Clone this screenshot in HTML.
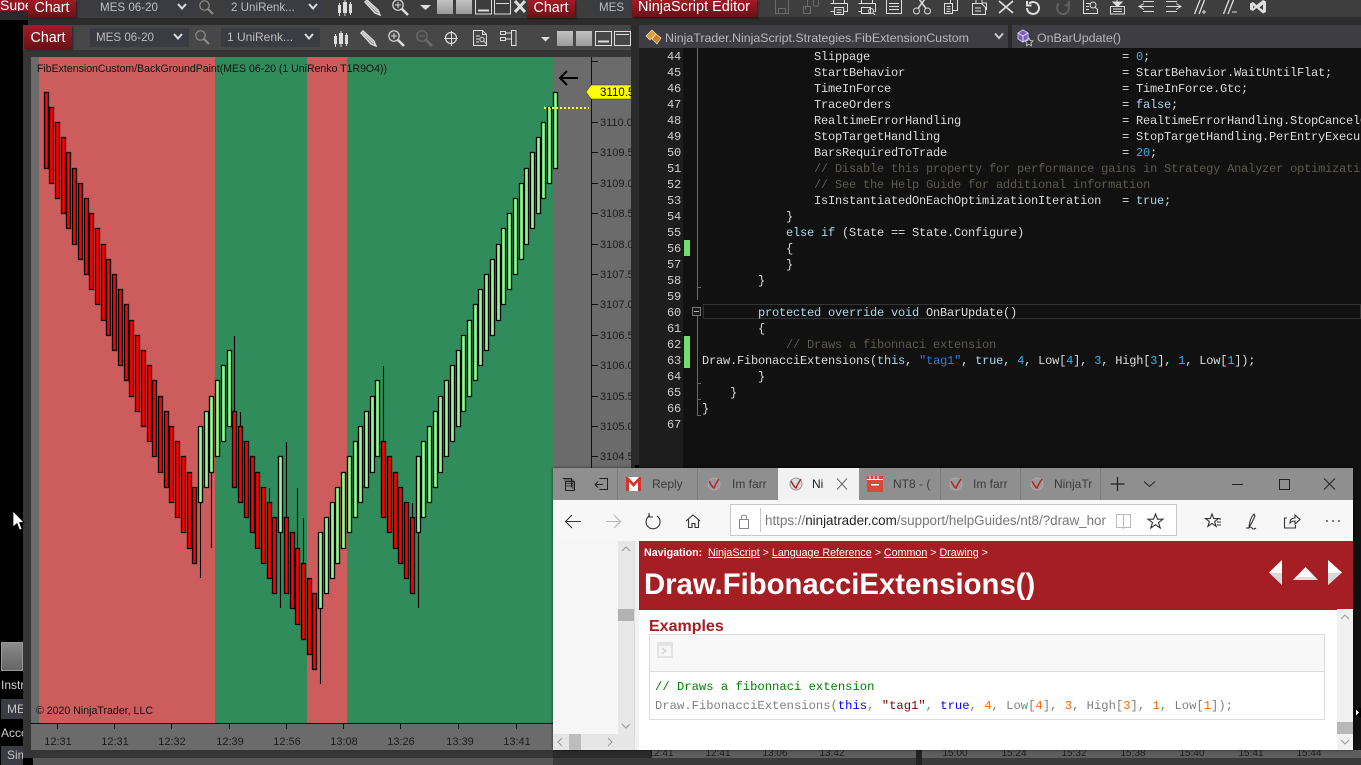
<!DOCTYPE html>
<html><head><meta charset="utf-8"><title>NinjaTrader</title>
<style>
html,body{margin:0;padding:0;width:1361px;height:765px;overflow:hidden;background:#000;font-family:"Liberation Sans",Arial,sans-serif}
#root{position:relative;width:1361px;height:765px;overflow:hidden}
.a{position:absolute;white-space:pre}
.btn{position:absolute;background:linear-gradient(#a01c26,#6a1116);color:#fff;font-size:14.3px;text-align:center;box-shadow:1px 1px 2px rgba(0,0,0,.5)}
.box{position:absolute;background:#3b3b43;color:#bdbdbd;font-size:11.6px;padding-left:6px;box-sizing:border-box}
.code{position:absolute;left:702px;width:659px;height:16px;line-height:16px;white-space:pre;font-family:"Liberation Mono",monospace;font-size:12px;letter-spacing:-.2px;color:#dcdcdc;overflow:hidden;margin-top:1px}
.code i{font-style:normal;position:absolute;left:420px;top:0;white-space:pre}
.k{color:#a4d8ec}.n{color:#2fb5ea}.s{color:#1f82dc}.c{color:#5f5a50}
.ln{position:absolute;left:640px;width:41px;height:16px;line-height:16px;text-align:right;font-family:"Liberation Mono",monospace;font-size:12px;letter-spacing:-.2px;color:#cfcfcf;margin-top:1px}
.tab{position:absolute;top:477px;font-size:12px;color:#222;height:14px;line-height:14px;overflow:hidden}
.m{font-family:"Liberation Mono",monospace;font-size:12.2px;position:absolute;left:655px;white-space:pre}
</style></head><body><div id="root">

<!-- base panels -->
<div class="a" style="left:28px;top:0;width:604px;height:18px;background:#3d3d3d"></div>
<div class="a" style="left:28px;top:18px;width:604px;height:7px;background:#2c2c2c"></div>
<div class="a" style="left:0;top:0;width:28px;height:11px;background:#8f1820;color:#fff;font-size:14px;line-height:13px;overflow:hidden;padding-left:0"><span style="position:relative;top:-1px">Supe</span></div>
<div class="a" style="left:0;top:11px;width:28px;height:9px;background:#2a2a2a"></div>
<div class="btn" style="left:28px;top:0;width:48px;height:17px;line-height:16px">Chart</div>
<div class="box" style="left:94px;top:0;width:99px;height:16px;line-height:15px">MES 06-20</div>
<div class="box" style="left:225px;top:0;width:99px;height:16px;line-height:15px">2 UniRenk...</div>
<div class="btn" style="left:527px;top:0;width:48px;height:18px;line-height:17px">Chart</div>
<div class="box" style="left:593px;top:0;width:39px;height:16px;line-height:15px;overflow:hidden">MES 06-20</div>

<!-- main chart window -->
<div class="a" style="left:23px;top:25px;width:609px;height:25px;background:#474747"></div>
<div class="a" style="left:23px;top:50px;width:609px;height:708px;background:#353535"></div>
<div class="a" style="left:33px;top:758px;width:520px;height:7px;background:#565656"></div>
<div class="a" style="left:31px;top:57px;width:600px;height:693px;background:#6b6b6b"></div>
<div class="a" style="left:631px;top:25px;width:4px;height:740px;background:#2b2b2b"></div>
<div class="btn" style="left:24px;top:26px;width:48px;height:23px;line-height:25px">Chart</div>
<div class="box" style="left:90px;top:28px;width:99px;height:19px;line-height:19px">MES 06-20</div>
<div class="box" style="left:221px;top:28px;width:99px;height:19px;line-height:19px;font-size:12px">1 UniRenk...</div>

<!-- left column -->
<div class="a" style="left:1px;top:642px;width:22px;height:29px;background:linear-gradient(#8a8a8a,#666);border:1px solid #999;box-sizing:border-box"></div>
<div class="a" style="left:1px;top:678px;width:22px;overflow:hidden;color:#cfcfcf;font-size:12px">Instr</div>
<div class="a" style="left:1px;top:699px;width:22px;height:20px;background:#3b3b43;color:#c5c5c5;font-size:12px;line-height:20px;overflow:hidden;padding-left:6px;box-sizing:border-box">MES</div>
<div class="a" style="left:1px;top:726px;width:22px;overflow:hidden;color:#cfcfcf;font-size:12px">Account</div>
<div class="a" style="left:1px;top:746px;width:22px;height:19px;background:#3b3b43;color:#c5c5c5;font-size:12px;line-height:19px;overflow:hidden;padding-left:6px;box-sizing:border-box">Sim</div>

<!-- chart drawings -->
<svg class="a" style="left:0;top:0" width="1361" height="765" xmlns="http://www.w3.org/2000/svg">
<rect x="39" y="57" width="176" height="666" fill="#cd5c5c"/>
<rect x="215" y="57" width="92" height="666" fill="#318c5b"/>
<rect x="307" y="57" width="40" height="666" fill="#cd5c5c"/>
<rect x="347" y="57" width="206.500" height="666" fill="#318c5b"/>
<path d="M31 723.500H631M591.500 57V723" stroke="#111" fill="none"/>
<path stroke="#000" fill="none" stroke-width="1.100" d="M200.500 502V578M211.500 472V548M234.500 336V412M240.500 412V427M269.500 488V503M280.500 532V608M286.500 442V518M297.500 488V549M303.500 518V564M320.500 608V684M383.500 366V442M412.500 503V518M418.500 532V608"/>
<path fill="#ff0000" stroke="#000" stroke-width="1.300" d="M44.500 92.500h4v76h-4zM49.500 107.500h4v76h-4zM55.500 122.500h4v76h-4zM61.500 137.500h4v76h-4zM66.500 152.500h4v76h-4zM72.500 168.500h4v76h-4zM78.500 183.500h4v76h-4zM84.500 198.500h4v76h-4zM89.500 213.500h4v76h-4zM95.500 228.500h4v76h-4zM101.500 244.500h4v76h-4zM106.500 259.500h4v76h-4zM112.500 274.500h4v76h-4zM118.500 289.500h4v76h-4zM124.500 304.500h4v76h-4zM129.500 320.500h4v76h-4zM135.500 335.500h4v76h-4zM141.500 350.500h4v76h-4zM147.500 365.500h4v76h-4zM152.500 380.500h4v76h-4zM158.500 396.500h4v76h-4zM164.500 411.500h4v76h-4zM169.500 426.500h4v76h-4zM175.500 441.500h4v76h-4zM181.500 456.500h4v76h-4zM187.500 472.500h4v76h-4zM192.500 487.500h4v76h-4zM232.500 411.500h4v76h-4zM238.500 426.500h4v76h-4zM244.500 441.500h4v76h-4zM250.500 456.500h4v76h-4zM255.500 472.500h4v76h-4zM261.500 487.500h4v76h-4zM267.500 502.500h4v76h-4zM272.500 517.500h4v76h-4zM284.500 517.500h4v76h-4zM290.500 532.500h4v76h-4zM295.500 548.500h4v76h-4zM301.500 563.500h4v76h-4zM307.500 578.500h4v76h-4zM312.500 593.500h4v76h-4zM381.500 441.500h4v76h-4zM387.500 456.500h4v76h-4zM393.500 472.500h4v76h-4zM398.500 487.500h4v76h-4zM404.500 502.500h4v76h-4zM410.500 517.500h4v76h-4z"/>
<path fill="#8dfc8d" stroke="#000" stroke-width="1.300" d="M198.500 426.500h4v76h-4zM204.500 411.500h4v76h-4zM209.500 396.500h4v76h-4zM215.500 380.500h4v76h-4zM221.500 365.500h4v76h-4zM227.500 350.500h4v76h-4zM278.500 456.500h4v76h-4zM318.500 532.500h4v76h-4zM324.500 517.500h4v76h-4zM330.500 502.500h4v76h-4zM335.500 487.500h4v76h-4zM341.500 472.500h4v76h-4zM347.500 456.500h4v76h-4zM353.500 441.500h4v76h-4zM358.500 426.500h4v76h-4zM364.500 411.500h4v76h-4zM370.500 396.500h4v76h-4zM375.500 380.500h4v76h-4zM416.500 456.500h4v76h-4zM421.500 441.500h4v76h-4zM427.500 426.500h4v76h-4zM433.500 411.500h4v76h-4zM438.500 396.500h4v76h-4zM444.500 380.500h4v76h-4zM450.500 365.500h4v76h-4zM456.500 350.500h4v76h-4zM461.500 335.500h4v76h-4zM467.500 320.500h4v76h-4zM473.500 304.500h4v76h-4zM478.500 289.500h4v76h-4zM484.500 274.500h4v76h-4zM490.500 259.500h4v76h-4zM496.500 244.500h4v76h-4zM501.500 228.500h4v76h-4zM507.500 213.500h4v76h-4zM513.500 198.500h4v76h-4zM519.500 183.500h4v76h-4zM524.500 168.500h4v76h-4zM530.500 152.500h4v76h-4zM536.500 137.500h4v76h-4zM541.500 122.500h4v76h-4zM547.500 107.500h4v76h-4zM553.500 92.500h4v76h-4z"/>
<path d="M544 108H589" stroke="#ffff00" stroke-width="2" stroke-dasharray="2 2"/>
<path d="M578 78H560M567 71l-7 7 7 7" stroke="#000" stroke-width="2" fill="none"/>
<path d="M592 61.500h6M592 92.500h6M592 122.500h6M592 152.500h6M592 183.500h6M592 213.500h6M592 244.500h6M592 274.500h6M592 304.500h6M592 335.500h6M592 365.500h6M592 396.500h6M592 426.500h6M592 456.500h6M57.500 723v6M114.500 723v6M171.500 723v6M229.500 723v6M286.500 723v6M343.500 723v6M400.500 723v6M458.500 723v6M516.500 723v6" stroke="#111" fill="none"/>
<g font-family="Liberation Sans" font-size="11" fill="#1c1c1c">
<text x="600" y="126">3110.0</text><text x="600" y="156">3109.5</text><text x="600" y="187">3109.0</text><text x="600" y="217">3108.5</text><text x="600" y="248">3108.0</text><text x="600" y="278">3107.5</text><text x="600" y="308">3107.0</text><text x="600" y="339">3106.5</text><text x="600" y="369">3106.0</text><text x="600" y="400">3105.5</text><text x="600" y="430">3105.0</text><text x="600" y="460">3104.5</text>
</g>
<g font-family="Liberation Sans" font-size="11" fill="#1c1c1c" text-anchor="middle">
<text x="58" y="745">12:31</text><text x="115" y="745">12:31</text><text x="172" y="745">12:32</text><text x="230" y="745">12:39</text><text x="287" y="745">12:56</text><text x="344" y="745">13:08</text><text x="401" y="745">13:26</text><text x="460" y="745">13:39</text><text x="517" y="745">13:41</text>
</g>
<path d="M591 85H631V99H591L586 92Z" fill="#ffff00" stroke="#333" stroke-width=".6"/>
<text x="600" y="96" font-family="Liberation Sans" font-size="11.500" fill="#000">3110.5</text>
<text x="37" y="72" font-family="Liberation Sans" font-size="10.800" fill="#111" textLength="350" lengthAdjust="spacingAndGlyphs">FibExtensionCustom/BackGroundPaint(MES 06-20 (1 UniRenko T1R9O4))</text>
<text x="36" y="714" font-family="Liberation Sans" font-size="11" fill="#111" textLength="117" lengthAdjust="spacingAndGlyphs">© 2020 NinjaTrader, LLC</text>

<defs>
<g id="cd" fill="#dcdcdc"><rect x="0" y="5" width="3" height="8"/><rect x="1" y="3" width="1" height="13"/><rect x="5" y="2" width="4" height="11"/><rect x="6.500" y="0" width="1" height="16"/><rect x="11" y="4" width="3" height="9"/><rect x="12" y="2" width="1" height="13"/></g>
<g id="pc" fill="none" stroke="#dcdcdc"><path d="M1 3L3 1L14 11L16 16L11 14Z" stroke-width="1.400" fill="#8a8a8a"/><path d="M3 3L13.500 13" stroke-width="1.200"/></g>
<g id="zi" fill="none" stroke="#dcdcdc"><circle cx="6" cy="6" r="5.200" stroke-width="1.200"/><path d="M10 10L16 16" stroke-width="2.600"/><path d="M3 6h6M6 3v6"/></g>
<g id="zo" fill="none" stroke="#6d6d6d"><circle cx="6" cy="6" r="5.200" stroke-width="1.200"/><path d="M10 10L16 16" stroke-width="2.600"/><path d="M3 6h6"/></g>
<g id="ms" fill="none" stroke="#8c8c8c"><circle cx="5.500" cy="5.500" r="4.700" stroke-width="1.200"/><path d="M9 9L14 14" stroke-width="2"/></g>
<path id="ch" d="M0 0L4 4.500L8 0" fill="none" stroke="#dcdcdc" stroke-width="2"/>
<linearGradient id="gb" x1="0" x2="0" y1="0" y2="1"><stop offset="0" stop-color="#c2c2c2"/><stop offset="1" stop-color="#9a9a9a"/></linearGradient>
</defs>

<!-- main toolbar -->
<use href="#ms" x="195" y="30"/>
<use href="#ch" x="174" y="34"/><use href="#ch" x="305" y="34"/>
<use href="#cd" x="334" y="31"/><use href="#pc" x="360" y="30"/><use href="#zi" x="388" y="30"/><use href="#zo" x="416" y="30"/>
<g fill="none" stroke="#dcdcdc"><circle cx="451" cy="38" r="5.500" stroke-width="1.200"/><path d="M444 38.500h14M451.500 31v15"/>
<path d="M473.500 30.500h9l4 4v11h-13zM482.500 30.500v4h4M476 36h4M476 39h3M476 42h3" stroke-width="1"/><circle cx="482" cy="39.500" r="2.200"/><path d="M484 41.500l3 3"/>
<path d="M500.500 31.500h5v3h-5zM500.500 37.500h5v3h-5zM505.500 33h6M505.500 39h6M511.500 30.500h4.500v15h-4.500z"/></g>
<path d="M541 37h9l-4.500 4.500z" fill="#ddd"/>
<rect x="557" y="31" width="16" height="15" fill="url(#gb)"/><rect x="576" y="31" width="16" height="15" fill="url(#gb)"/>
<g fill="none" stroke="#dcdcdc"><rect x="595.500" y="31.500" width="16" height="14"/><path d="M598 41.500h11" stroke-width="2"/><rect x="614.500" y="31.500" width="16" height="14"/><path d="M616 34.500h13"/></g>
<!-- back toolbar -->
<use href="#ms" x="199" y="0"/>
<use href="#ch" x="178" y="4"/><use href="#ch" x="309" y="4"/>
<use href="#cd" x="338" y="0"/><use href="#pc" x="364" y="-1"/><use href="#zi" x="392" y="-1"/>
<path d="M420 5h11l-5.500 5z" fill="#ddd"/>
<rect x="437" y="0" width="16" height="14" fill="url(#gb)"/><rect x="456" y="0" width="16" height="14" fill="url(#gb)"/>
<g fill="none" stroke="#dcdcdc"><rect x="475.500" y="-1" width="16" height="15"/><path d="M478 10.500h11" stroke-width="2"/><rect x="494.500" y="-1" width="16" height="15"/><path d="M496 3.500h13"/></g>
<path d="M515 1L525 12M525 1L515 12" stroke="#ddd" stroke-width="3"/>
</svg>

<!-- editor -->
<div class="a" style="left:632px;top:0;width:729px;height:17px;background:#3e3e3e"></div>
<div class="a" style="left:632px;top:17px;width:729px;height:8px;background:#2d2d2d"></div>
<div class="a" style="left:632px;top:25px;width:729px;height:440px;background:#2a2a2a"></div>
<div class="a" style="left:639px;top:25px;width:369px;height:23px;background:#3d3d43"></div>
<div class="a" style="left:1012px;top:25px;width:349px;height:23px;background:#3d3d43"></div>
<div class="a" style="left:639px;top:48px;width:722px;height:702px;background:#111"></div>
<div class="a" style="left:639px;top:48px;width:44px;height:702px;background:#1d1d1d"></div>
<div class="btn" style="left:632px;top:0;width:125px;height:17px;line-height:14px;font-size:14.500px;text-align:left;padding-left:6px;box-sizing:border-box">NinjaScript Editor</div>
<div class="a" style="left:665px;top:31px;font-size:12.400px;color:#b9b9b9">NinjaTrader.NinjaScript.Strategies.FibExtensionCustom</div>
<div class="a" style="left:1037px;top:31px;font-size:12.400px;color:#b9b9b9">OnBarUpdate()</div>

<div class="ln" style="top:48px">44</div><div class="ln" style="top:64px">45</div><div class="ln" style="top:80px">46</div><div class="ln" style="top:96px">47</div><div class="ln" style="top:112px">48</div><div class="ln" style="top:128px">49</div><div class="ln" style="top:144px">50</div><div class="ln" style="top:160px">51</div><div class="ln" style="top:176px">52</div><div class="ln" style="top:192px">53</div><div class="ln" style="top:208px">54</div><div class="ln" style="top:224px">55</div><div class="ln" style="top:240px">56</div><div class="ln" style="top:256px">57</div><div class="ln" style="top:272px">58</div><div class="ln" style="top:288px">59</div><div class="ln" style="top:304px">60</div><div class="ln" style="top:320px">61</div><div class="ln" style="top:336px">62</div><div class="ln" style="top:352px">63</div><div class="ln" style="top:368px">64</div><div class="ln" style="top:384px">65</div><div class="ln" style="top:400px">66</div><div class="ln" style="top:416px">67</div>

<div class="a" style="left:684px;top:240px;width:6px;height:16px;background:#6fe06f"></div>
<div class="a" style="left:684px;top:336px;width:6px;height:32px;background:#6fe06f"></div>
<div class="a" style="left:703px;top:304px;width:658px;height:15px;border:1px solid #333;box-sizing:border-box"></div>

<div class="code" style="top:48px">                Slippage<i>= <span class="n">0</span>;</i></div>
<div class="code" style="top:64px">                StartBehavior<i>= StartBehavior.WaitUntilFlat;</i></div>
<div class="code" style="top:80px">                TimeInForce<i>= TimeInForce.Gtc;</i></div>
<div class="code" style="top:96px">                TraceOrders<i>= <span class="k">false</span>;</i></div>
<div class="code" style="top:112px">                RealtimeErrorHandling<i>= RealtimeErrorHandling.StopCancelClose;</i></div>
<div class="code" style="top:128px">                StopTargetHandling<i>= StopTargetHandling.PerEntryExecution;</i></div>
<div class="code" style="top:144px">                BarsRequiredToTrade<i>= <span class="n">20</span>;</i></div>
<div class="code c" style="top:160px">                // Disable this property for performance gains in Strategy Analyzer optimizations</div>
<div class="code c" style="top:176px">                // See the Help Guide for additional information</div>
<div class="code" style="top:192px">                IsInstantiatedOnEachOptimizationIteration<i>= <span class="k">true</span>;</i></div>
<div class="code" style="top:208px">            }</div>
<div class="code" style="top:224px">            <span class="k">else if</span> (State == State.Configure)</div>
<div class="code" style="top:240px">            {</div>
<div class="code" style="top:256px">            }</div>
<div class="code" style="top:272px">        }</div>
<div class="code" style="top:304px">        <span class="k">protected override void</span> OnBarUpdate()</div>
<div class="code" style="top:320px">        {</div>
<div class="code c" style="top:336px">            // Draws a fibonnaci extension</div>
<div class="code" style="top:352px">Draw.FibonacciExtensions(<span class="k">this</span>, <span class="s">"tag1"</span>, <span class="k">true</span>, <span class="n">4</span>, Low[<span class="n">4</span>], <span class="n">3</span>, High[<span class="n">3</span>], <span class="n">1</span>, Low[<span class="n">1</span>]);</div>
<div class="code" style="top:368px">        }</div>
<div class="code" style="top:384px">    }</div>
<div class="code" style="top:400px">}</div>

<svg class="a" style="left:0;top:0" width="1361" height="765" xmlns="http://www.w3.org/2000/svg">
<!-- fold lines -->
<path d="M697.500 48V287.500H701M697.500 316V415.500H701M697.500 383.500H701M697.500 399.500H701M697.500 48V300" stroke="#6a6a6a" fill="none"/>
<rect x="692.500" y="307.500" width="8" height="8" fill="#1a1a1a" stroke="#777"/><path d="M694 311.500h5" stroke="#bbb"/>
<!-- editor combo icons -->
<path d="M646 36l6-6 4 4-6 6z" fill="#e09a35" stroke="#f2e2c4" stroke-width=".7"/><path d="M652 39l4-5 5 4-4 6z" fill="#c97f24" stroke="#f2e2c4" stroke-width=".7"/>
<path d="M1018 33l5-3 5 3v6l-5 3-5-3z" fill="#7a5fc0" stroke="#cfc5ef"/><path d="M1018 33l5 3 5-3M1023 36v6" stroke="#e0daf5" fill="none"/><path d="M1029 38l1.200 2.500 2.800.4-2 2 .5 2.800-2.500-1.300-2.500 1.300.5-2.800-2-2 2.800-.4z" fill="#333" stroke="#ddd" stroke-width=".8"/>
<path d="M995 33.500l4 4.500 4-4.500" fill="none" stroke="#c8c8c8" stroke-width="2"/>
<!-- editor toolbar -->
<g fill="none" stroke="#6a6a6a">
<path d="M775.500 0V13.500H788.500V0M778.500 13V8.500H785.500V13"/>
<path d="M803.500 6.500h7v7h-7zM807.500 0v6M813.500 0v6h5V0M805.500 6.500v3"/>
</g>
<g fill="none" stroke="#dedede">
<path d="M833.500 0v3.500h11V0M830.500 3.500h17v8h-4M834.500 11.500h-4M834.500 7.500h9v7h-9zM836.500 10h5M836.500 12.500h5"/>
<path d="M861.500 0v3.500h11V0M858.500 3.500h17v8h-1M861.500 11.500h-3M861.500 7.500h9v6h-9z"/><circle cx="871" cy="11" r="2.500"/><path d="M873 13l2 2"/>
<path d="M886.500 0V13.500H901.500V0M889 3.500h10M889 6.500h10M889 9.500h10"/>
<circle cx="916.500" cy="11" r="3"/><circle cx="927.500" cy="11" r="3"/><path d="M918 8.500L925 -1M926 8.500L919 -1" stroke-width="1.500"/>
<path d="M944.500 3.500h8v10h-8zM950.500 3.500V0M957.500 0V10.500H952.500M946.500 6.500h4M946.500 9h4M946.500 11.500h4"/>
<path d="M972.500 3.500h9l4 4v7h-13zM976 0V3M982 0V3h4.500V10M975 8h6M975 11h6"/>
<path d="M999 1L1013 13M1013 1L999 13" stroke-width="1.800"/>
<path d="M1029 3.500A6 6 0 1 1 1027 8M1027 1v4.500h4.500" stroke-width="2"/>
</g>
<path d="M1059 3.500A6 6 0 1 0 1067 3.500M1069 1v4.500h-4.500" fill="none" stroke="#5f5f5f" stroke-width="2"/>
<g fill="none" stroke="#dedede">
<path d="M1083.500 0V13.500H1097.500V9M1086 3.500h4M1086 6.500h3M1086 9.500h3"/><circle cx="1093" cy="5" r="3"/><path d="M1095 7l3 3"/>
<path d="M1110.500 6.500H1124.500V14H1110.500zM1113 9h9M1113 11.500h9M1117 0v4"/><path d="M1113 2h9l-4.500 4.500z" fill="#dedede"/>
<path d="M1144 3.500l-5 3 5 3M1139 6.500H1154M1143 1.500H1154M1143 11.500H1154"/>
<path d="M1176 3.500l5 3-5 3M1166 6.500H1181M1166 1.500H1177M1166 11.500H1177"/>
<path d="M1194.500 14L1200 0M1199 14L1204.500 0" stroke-width="1.300"/><path d="M1204 10v4M1202 12h4"/>
<path d="M1223.500 14L1229 0M1228 14L1233.500 0" stroke-width="1.300"/><path d="M1232 12h5"/>
</g>
<path d="M1250 3.500l3-1.500 3.500 3L1263 0l3 1.500v10.500l-3 1.500-6.500-5.500-3.500 3-3-1.500zM1253 5.500v3l1.500-1.500zM1263 4.500l-3.500 3 3.500 2.500z" fill="#dedede" fill-rule="evenodd"/>
<!-- small right scroll arrow -->
<rect x="1354" y="708" width="7" height="9" fill="#000"/><path d="M1356 709.500l3 3-3 3z" fill="#fff"/>
<!-- mouse cursor -->
<path d="M13 511V527L17 523.500L19.500 530L22 529L19.500 522.500H24Z" fill="#fff" stroke="#000" stroke-width=".7"/>
</svg>

<!-- strip under browser -->
<div class="a" style="left:553px;top:750px;width:808px;height:8px;background:#5e5e5e"></div>
<div class="a" style="left:553px;top:750px;width:99px;height:8px;background:#2b2b2b"></div>
<div class="a" style="left:553px;top:758px;width:808px;height:7px;background:#3a3a3a"></div>
<div class="a" style="left:916px;top:750px;width:6px;height:15px;background:#222"></div>
<svg class="a" style="left:0;top:0" width="1361" height="765" xmlns="http://www.w3.org/2000/svg"><g font-family="Liberation Sans" font-size="10" fill="#1c1c1c" text-anchor="middle"><text x="661" y="756">12:41</text><text x="718" y="756">12:41</text><text x="775" y="756">13:06</text><text x="832" y="756">13:42</text><text x="955" y="756">15:00</text><text x="1014" y="756">15:24</text><text x="1074" y="756">15:32</text><text x="1133" y="756">15:38</text><text x="1192" y="756">15:40</text><text x="1251" y="756">15:41</text><text x="1309" y="756">15:44</text></g></svg>

<!-- browser -->
<div class="a" style="left:553px;top:468px;width:800px;height:282px;background:#fff;box-shadow:0 0 3px rgba(0,0,0,.6)"></div>
<div class="a" style="left:553px;top:468px;width:800px;height:32px;background:#8f8f8f"></div>
<div class="a" style="left:778px;top:468px;width:81px;height:32px;background:#f2f2f2"></div>
<div class="a" style="left:553px;top:500px;width:800px;height:41px;background:#f7f7f7"></div>
<div class="a" style="left:553px;top:541px;width:65px;height:193px;background:#f6f6f6"></div>
<div class="a" style="left:618px;top:541px;width:16px;height:193px;background:#e7e7e7"></div>
<div class="a" style="left:618px;top:609px;width:16px;height:12px;background:#b2b2b2"></div>
<div class="a" style="left:553px;top:734px;width:81px;height:16px;background:#e6e6e6"></div>
<div class="a" style="left:569px;top:734px;width:12px;height:16px;background:#bdbdbd"></div>
<div class="a" style="left:634px;top:541px;width:5px;height:209px;background:#f2f2f2;border-left:1px solid #ddd;box-sizing:border-box"></div>
<div class="a" style="left:639px;top:541px;width:714px;height:69px;background:#a51e24"></div>
<div class="a" style="left:1337px;top:610px;width:16px;height:140px;background:#f1f1f1"></div>
<div class="a" style="left:1337px;top:722px;width:16px;height:12px;background:#b8b8b8"></div>
<div class="a" style="left:1337px;top:609px;width:16px;height:4px;background:#f1f1f1"></div>

<div class="tab" style="left:652px;width:37px;color:#3a3a3a">Reply t</div>
<div class="tab" style="left:732px;width:38px;color:#3a3a3a">Im farr</div>
<div class="tab" style="left:812px;width:14px">Ni</div>
<div class="tab" style="left:893px;width:38px;color:#3a3a3a">NT8 - (</div>
<div class="tab" style="left:973px;width:38px;color:#3a3a3a">Im farr</div>
<div class="tab" style="left:1054px;width:38px;color:#3a3a3a">NinjaTr</div>

<div class="a" style="left:730px;top:504px;width:447px;height:32px;border:1px solid #c8c8c8;background:#fff;box-sizing:border-box"></div>
<div class="a" style="left:765px;top:513px;width:341px;overflow:hidden;font-size:13.400px;color:#777">https://<span style="color:#222">ninjatrader.com</span>/support/helpGuides/nt8/?draw_hor</div>

<div class="a" style="left:644px;top:547px;font-size:10.700px;color:#fff;font-weight:bold">Navigation:</div>
<div class="a" style="left:708px;top:547px;font-size:10.700px;color:#fff"><u>NinjaScript</u> &gt; <u>Language Reference</u> &gt; <u>Common</u> &gt; <u>Drawing</u> &gt;</div>
<div class="a" style="left:644px;top:568px;font-size:29.300px;line-height:34px;color:#fff;font-weight:bold">Draw.FibonacciExtensions()</div>
<div class="a" style="left:649px;top:617px;font-size:16px;line-height:19px;color:#a51e24;font-weight:bold">Examples</div>
<div class="a" style="left:649px;top:634px;width:676px;height:86px;border:1px solid #ddd;box-sizing:border-box;background:#fff"></div>
<div class="a" style="left:650px;top:635px;width:674px;height:36px;background:#f8f8f8;border-bottom:1px solid #ddd"></div>
<div class="m" style="top:680px;color:#008000">// Draws a fibonnaci extension</div>
<div class="m" style="top:699px;color:#808080">Draw.FibonacciExtensions(<span style="color:#0000ff">this</span>, <span style="color:#800000">"tag1"</span>, <span style="color:#0000ff">true</span>, <span style="color:#ff6600">4</span>, Low[<span style="color:#ff6600">4</span>], <span style="color:#ff6600">3</span>, High[<span style="color:#ff6600">3</span>], <span style="color:#ff6600">1</span>, Low[<span style="color:#ff6600">1</span>]);</div>

<svg class="a" style="left:0;top:0" width="1361" height="765" xmlns="http://www.w3.org/2000/svg">
<path d="M617.500 468V500M697.500 468V500M940.500 468V500M1020.500 468V500M1100.500 468V500" stroke="#7b7b7b"/>
<!-- tab bar left icons -->
<g fill="none" stroke="#222">
<path d="M562.500 478.500h9v9M565.500 481.500h9v9h-9z"/><path d="M564 480h9v9M566 483.500h7M566 486h7" stroke-width=".8"/>
<path d="M595 484.500h8M598 481.500l-3 3 3 3M599.500 478.500h8v11h-8"/>
<path d="M1117.500 477v14M1110.500 484h14" stroke-width="1.200"/>
<path d="M1144 481.500l5.500 5 5.500-5"/>
<path d="M1232 484.500h11M1279.500 479.500h10v10h-10zM1324 478.500l11 11M1335 478.500l-11 11"/>
<path d="M837 478.500l10 11M847 478.500l-10 11" stroke="#666"/>
</g>
<!-- favicons -->
<rect x="626" y="477" width="15" height="14" fill="#fff"/><path d="M626 477h2l5.500 6 5.500-6h2v14h-3v-9l-4.500 5-4.500-5v9h-3z" fill="#d8332a"/>
<g fill="none" stroke-width="1.500"><circle cx="714" cy="484" r="6" fill="#9a9a9a" stroke="#aaa" stroke-width="1"/><path d="M709 481q3 6 5 7q1-3 5-9" stroke="#b3262b"/>
<circle cx="796" cy="484" r="6" fill="#ddd" stroke="#999" stroke-width="1"/><path d="M791 481q3 6 5 7q1-3 5-9" stroke="#b3262b"/>
<circle cx="956" cy="484" r="6" fill="#9a9a9a" stroke="#aaa" stroke-width="1"/><path d="M951 481q3 6 5 7q1-3 5-9" stroke="#b3262b"/>
<circle cx="1037" cy="484" r="6" fill="#9a9a9a" stroke="#aaa" stroke-width="1"/><path d="M1032 481q3 6 5 7q1-3 5-9" stroke="#b3262b"/></g>
<rect x="867" y="476" width="16" height="16" fill="#d9483a"/><path d="M867 479.500h16" stroke="#fff"/><path d="M870 476v3M874 476v3M878 476v3" stroke="#fff"/><rect x="871" y="484" width="8" height="1.500" fill="#fff"/>
<!-- nav icons -->
<g fill="none" stroke="#333" stroke-width="1.100">
<path d="M566 521.500H581M572 515l-6.500 6.500 6.500 6.500"/>
<path d="M606 521.500H621M614 515l6.500 6.500-6.500 6.500" stroke="#b5b5b5"/>
<path d="M650 515.500A7 7 0 1 0 657 516M649 513v4h4"/>
<path d="M686 521l7-6 7 6M688.500 519v8.500h3.500v-4h3v4h3.500v-8.500"/>
<path d="M1155.500 514l2 5.200h5.500l-4.500 3.400 1.700 5.400-4.700-3.300-4.700 3.300 1.700-5.400-4.500-3.400h5.500z"/>
<path d="M1212 514l1.700 4.600h4.800l-3.900 3 1.500 4.700-4.100-2.900-4.100 2.900 1.500-4.700-3.900-3h4.800zM1217 522h4M1217 525h4M1219 519h2"/>
<path d="M1254 514q-4 4-5 13q3-4 6-11zM1246 528h3q2-2 3 0t4 0"/>
<path d="M1287 518h-2.500v10h11v-3M1290 523q0-5 5-5v-3l5 4.500-5 4.500v-3q-3 0-5 2z"/>
</g>
<g fill="#555"><circle cx="1327" cy="521" r="1"/><circle cx="1333" cy="521" r="1"/><circle cx="1339" cy="521" r="1"/></g>
<path d="M760.500 508V532" stroke="#c8c8c8"/>
<path d="M739.500 519.500h9v9h-9zM741.500 519v-2.500a3 3 0 0 1 5 0V519" fill="none" stroke="#888"/>
<path d="M1116.500 514.500h6.500l.5 1 .5-1h6.500v13h-6.500l-.5 1-.5-1h-6.500zM1123.500 516v11" fill="none" stroke="#bbb"/>
<!-- scroll chevrons -->
<g fill="none" stroke="#999"><path d="M622 551l4-4 4 4M622 724l4 4 4-4M562 738l-4 4 4 4M608 738l4 4-4 4M1341 619l4-4 4 4M1341 740l4 4 4-4"/></g>
<!-- nav arrows -->
<path d="M1282 560V585L1269 572.500Z" fill="#fff"/><path d="M1282 573V585L1269 572.500Z" fill="#d9d9d9"/>
<path d="M1293 580L1305.500 567L1318 580Z" fill="#fff"/><path d="M1293 580H1318L1314 577H1297Z" fill="#ddd"/>
<path d="M1328 560V585L1342 572.500Z" fill="#fff"/><path d="M1328 573V585L1342 572.500Z" fill="#d9d9d9"/>
<!-- code icon -->
<rect x="657" y="642" width="16" height="16" fill="#e4e4e4"/><rect x="659" y="646" width="12" height="10" fill="#f6f6f6"/><path d="M662 648l4 3-4 3" fill="none" stroke="#d0d0d0" stroke-width="1.300"/>
</svg>
</div></body></html>
